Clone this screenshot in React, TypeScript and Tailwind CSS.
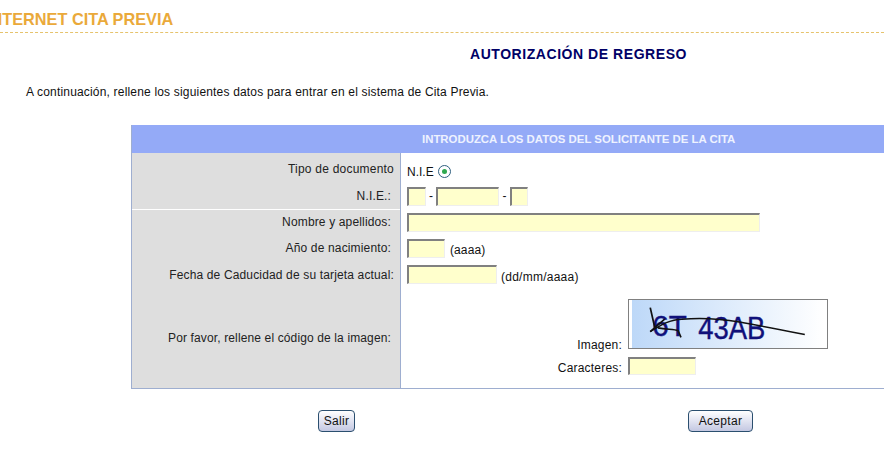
import React from 'react';

const sans = "font-['Liberation_Sans',Arial,sans-serif]";
const field = 'h-[19px] bg-[#ffffcc] border border-[#eeeeee] border-t-[#808080] border-l-[#808080] border-t-2 border-l-2 block';

const Label: React.FC<{ h: string; children: React.ReactNode; pr?: string; track?: string }> = ({ h, children, pr = 'pr-[9px]', track = 'tracking-[0.15px]' }) => (
  <div className={`${h} flex items-center justify-end ${pr} text-[12px] ${track} text-[#222]`}>{children}</div>
);

const Captcha = () => (
  <svg width="200" height="50" viewBox="0 0 200 50" className="block border border-[#808080] box-border">
    <defs>
      <linearGradient id="cap" x1="0" y1="0" x2="1" y2="0">
        <stop offset="0" stopColor="#bdd8f8" />
        <stop offset="1" stopColor="#ffffff" />
      </linearGradient>
    </defs>
    <rect width="200" height="50" fill="url(#cap)" />
    <text x="21" y="37" fontFamily="Liberation Sans" fontSize="31" fill="#10107a" stroke="#10107a" strokeWidth="0.4" textLength="36" lengthAdjust="spacingAndGlyphs">6T</text>
    <text x="69" y="41" fontFamily="Liberation Sans" fontSize="33" fill="#10107a" stroke="#10107a" strokeWidth="0.4" textLength="70" lengthAdjust="spacingAndGlyphs">43AB</text>
    <path d="M19 33 C30 26 40 20 52 20 C75 18 95 20 112 23 C135 27 155 31 180 36" fill="none" stroke="#111" strokeWidth="1.6" />
    <path d="M19 8 L24 30 M19 33 L34 20 M27 29 C36 31 44 30 48 32 L51 39" fill="none" stroke="#111" strokeWidth="1.8" />
  </svg>
);

export default function App() {
  return (
    <div className={`w-[884px] h-[449px] overflow-hidden bg-white ${sans}`}>
      <div className="h-[33px] border-b border-dashed border-[#e6c36c] pt-[10px] overflow-hidden">
        <div className="ml-[-14px] text-[16.3px] leading-[18px] font-bold text-[#eaa93a] whitespace-nowrap">INTERNET CITA PREVIA</div>
      </div>
      <h1 className="mt-[12px] ml-[470px] text-[14px] leading-[18px] font-bold tracking-[0.55px] text-[#000066] whitespace-nowrap">AUTORIZACIÓN DE REGRESO</h1>
      <p className="mt-[21px] ml-[26px] text-[12px] leading-[16px] tracking-[0.18px] text-[#111] whitespace-nowrap">
        A continuación, rellene los siguientes datos para entrar en el sistema de Cita Previa.
      </p>

      <div className="mt-[25px] ml-[131px] w-[753px] border-l border-b border-[#9eaed0]">
        <div className="h-[28px] bg-[#94aaf7] flex items-center pl-[290px] pt-px text-[11.4px] font-bold text-[#eef2ff] whitespace-nowrap">
          INTRODUZCA LOS DATOS DEL SOLICITANTE DE LA CITA
        </div>
        <div className="flex h-[235px]">
          <div className="w-[269px] bg-[#dedede] border-r border-[#9eaed0] shrink-0">
            <Label h="h-[31px]" pr="pr-[6px]" track="tracking-[0.22px]">Tipo de documento</Label>
            <Label h="h-[25px] pb-[2px]">N.I.E.:</Label>
            <div className="h-px bg-white" />
            <Label h="h-[24px]">Nombre y apellidos:</Label>
            <Label h="h-[28px]">Año de nacimiento:</Label>
            <Label h="h-[25px]" pr="pr-[6px]">Fecha de Caducidad de su tarjeta actual:</Label>
            <Label h="h-[101px]" track="tracking-[0.13px]">Por favor, rellene el código de la imagen:</Label>
          </div>
          <div className="flex-1 pl-[6px] text-[12px] text-[#111]">
            <div className="h-[33px] flex items-center gap-[4px] pt-[4px]">
              <span>N.I.E</span>
              <span className="w-[13px] h-[13px] rounded-full border border-[#2f5f7f] bg-white flex items-center justify-center">
                <span className="w-[5px] h-[5px] rounded-full bg-[#2fa84f]" />
              </span>
            </div>
            <div className="h-[20px] flex items-center gap-[3px]">
              <span className={`${field} w-[19px]`} />
              <span className="w-[4px] text-center">-</span>
              <span className={`${field} w-[63px]`} />
              <span className="w-[5px] text-center">-</span>
              <span className={`${field} w-[18px]`} />
            </div>
            <div className="mt-[7px] h-[19px]"><span className={`${field} w-[353px]`} /></div>
            <div className="mt-[7px] h-[19px] flex items-center gap-[5px]">
              <span className={`${field} w-[38px]`} />
              <span className="text-[12px] tracking-[0.1px] pt-[3px]">(aaaa)</span>
            </div>
            <div className="mt-[7px] h-[19px] flex items-center gap-[4px]">
              <span className={`${field} w-[90px]`} />
              <span className="text-[12px] tracking-[0.25px] pt-[4px]">(dd/mm/aaaa)</span>
            </div>
            <div className="mt-[15px] flex justify-start">
              <div className="w-[221px] flex flex-col items-end pt-[39px] pr-[6px] gap-[9px] text-[12px] tracking-[0.2px]">
                <span className="leading-[14px]">Imagen:</span>
                <span className="leading-[14px]">Caracteres:</span>
              </div>
              <div>
                <Captcha />
                <span className={`${field} !h-[18px] w-[68px] mt-[8px]`} />
              </div>
            </div>
          </div>
        </div>
      </div>

      <div className="mt-[21px] flex">
        <button className="ml-[318px] w-[37px] h-[22px] rounded-[4px] border border-[#2b4f6f] bg-gradient-to-b from-white to-[#c4c8e2] text-[12px] tracking-[0.3px] text-[#111]">Salir</button>
        <button className="ml-[333px] w-[65px] h-[22px] rounded-[4px] border border-[#2b4f6f] bg-gradient-to-b from-white to-[#c4c8e2] text-[12px] tracking-[0.3px] text-[#111]">Aceptar</button>
      </div>
    </div>
  );
}
